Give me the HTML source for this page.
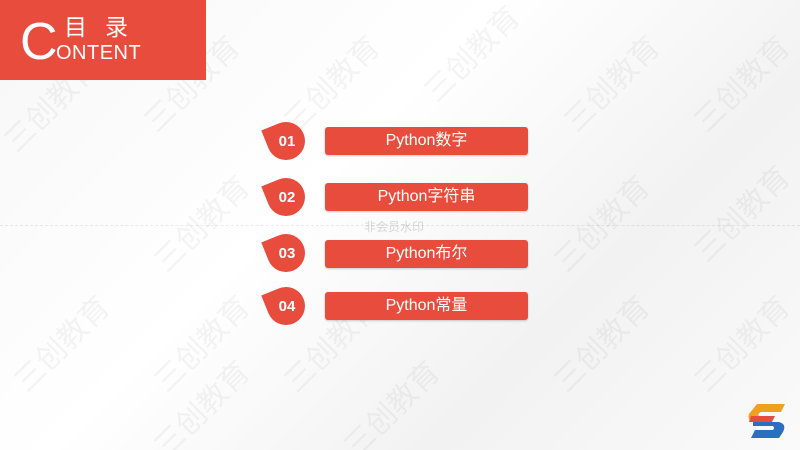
<!DOCTYPE html>
<html style="background:#f5f5f5"><head><meta charset="utf-8"><style>
html,body{margin:0;width:800px;height:450px;overflow:hidden}
body{position:relative;background:linear-gradient(135deg,#f7f7f7,#ffffff 40%,#f2f2f2 70%,#fafafa);font-family:"Liberation Sans","Noto Sans CJK SC",sans-serif}
.wrap{position:absolute;left:0;top:0;width:800px;height:450px;overflow:hidden;contain:paint;clip-path:inset(0)}
.hdr{position:absolute;left:0;top:0;width:206px;height:80px;background:#e84c3d;color:#fff}
.hdr .c{position:absolute;left:20px;top:14px;font-size:52px;line-height:56px}
.hdr .t1{position:absolute;left:64px;top:8px;font-size:23px;letter-spacing:18px;font-family:"Noto Sans CJK SC",sans-serif}
.hdr .t2{position:absolute;left:56px;top:42px;font-size:20px;letter-spacing:0.5px}
.wm{position:absolute;color:rgba(0,0,0,0.045);font-size:30px;transform:rotate(-45deg);white-space:nowrap;font-family:"Noto Sans CJK SC",sans-serif}
.b{position:absolute;width:38px;height:38px;background:#e84c3d;border-radius:0 50% 50% 50%;transform:rotate(-22deg)}
.n{position:absolute;width:38px;text-align:center;color:#fff;font-weight:bold;font-size:15px;font-family:"Liberation Sans Narrow","Liberation Sans",sans-serif}
.bar{position:absolute;left:325px;width:203px;height:28px;background:#e84c3d;border-radius:3px;color:#fff;text-align:center;font-size:16px;line-height:28px;box-shadow:0 1px 2px rgba(0,0,0,.2)}
</style></head><body>
<div class="wrap">
<div class="wm" style="left:-10px;top:80px">三创教育</div>
<div class="wm" style="left:130px;top:60px">三创教育</div>
<div class="wm" style="left:270px;top:60px">三创教育</div>
<div class="wm" style="left:410px;top:30px">三创教育</div>
<div class="wm" style="left:550px;top:60px">三创教育</div>
<div class="wm" style="left:680px;top:60px">三创教育</div>
<div class="wm" style="left:140px;top:200px">三创教育</div>
<div class="wm" style="left:540px;top:200px">三创教育</div>
<div class="wm" style="left:680px;top:190px">三创教育</div>
<div class="wm" style="left:0px;top:320px">三创教育</div>
<div class="wm" style="left:140px;top:320px">三创教育</div>
<div class="wm" style="left:270px;top:320px">三创教育</div>
<div class="wm" style="left:540px;top:320px">三创教育</div>
<div class="wm" style="left:680px;top:320px">三创教育</div>
<div class="wm" style="left:140px;top:385px">三创教育</div>
<div class="wm" style="left:330px;top:385px">三创教育</div>
</div>
<div style="position:absolute;left:0;right:0;top:225px;border-top:1px dashed rgba(0,0,0,0.08)"></div>
<div style="position:absolute;left:364px;top:218px;font-size:12px;color:rgba(0,0,0,0.15)">非会员水印</div>
<div class="hdr"><div class="c">C</div><div class="t1">目录</div><div class="t2">ONTENT</div></div>
<div class="b" style="left:267px;top:122px"></div><div class="n" style="left:268px;top:133px">01</div>
<div class="b" style="left:267px;top:178px"></div><div class="n" style="left:268px;top:189px">02</div>
<div class="b" style="left:267px;top:234px"></div><div class="n" style="left:268px;top:245px">03</div>
<div class="b" style="left:267px;top:287px"></div><div class="n" style="left:268px;top:298px">04</div>
<div class="bar" style="top:127px">Python数字</div>
<div class="bar" style="top:183px">Python字符串</div>
<div class="bar" style="top:240px">Python布尔</div>
<div class="bar" style="top:292px">Python常量</div>
<svg style="position:absolute;left:745px;top:402px" width="44" height="38" viewBox="0 0 44 38">
<path d="M12 2 H40 L36 10 H16 Q12 12 14 14 H28 L24 20 H8 Q2 18 4 12 Z" fill="#f0a020"/>
<path d="M8 20 H34 Q42 22 38 30 L34 36 H6 L10 28 H28 Q30 26 28 24 H8 Z" fill="#2a6fc0"/>
<path d="M6 14 H30 L27 20 H4 Z" fill="#e84c3d"/>
</svg>
</body></html>
